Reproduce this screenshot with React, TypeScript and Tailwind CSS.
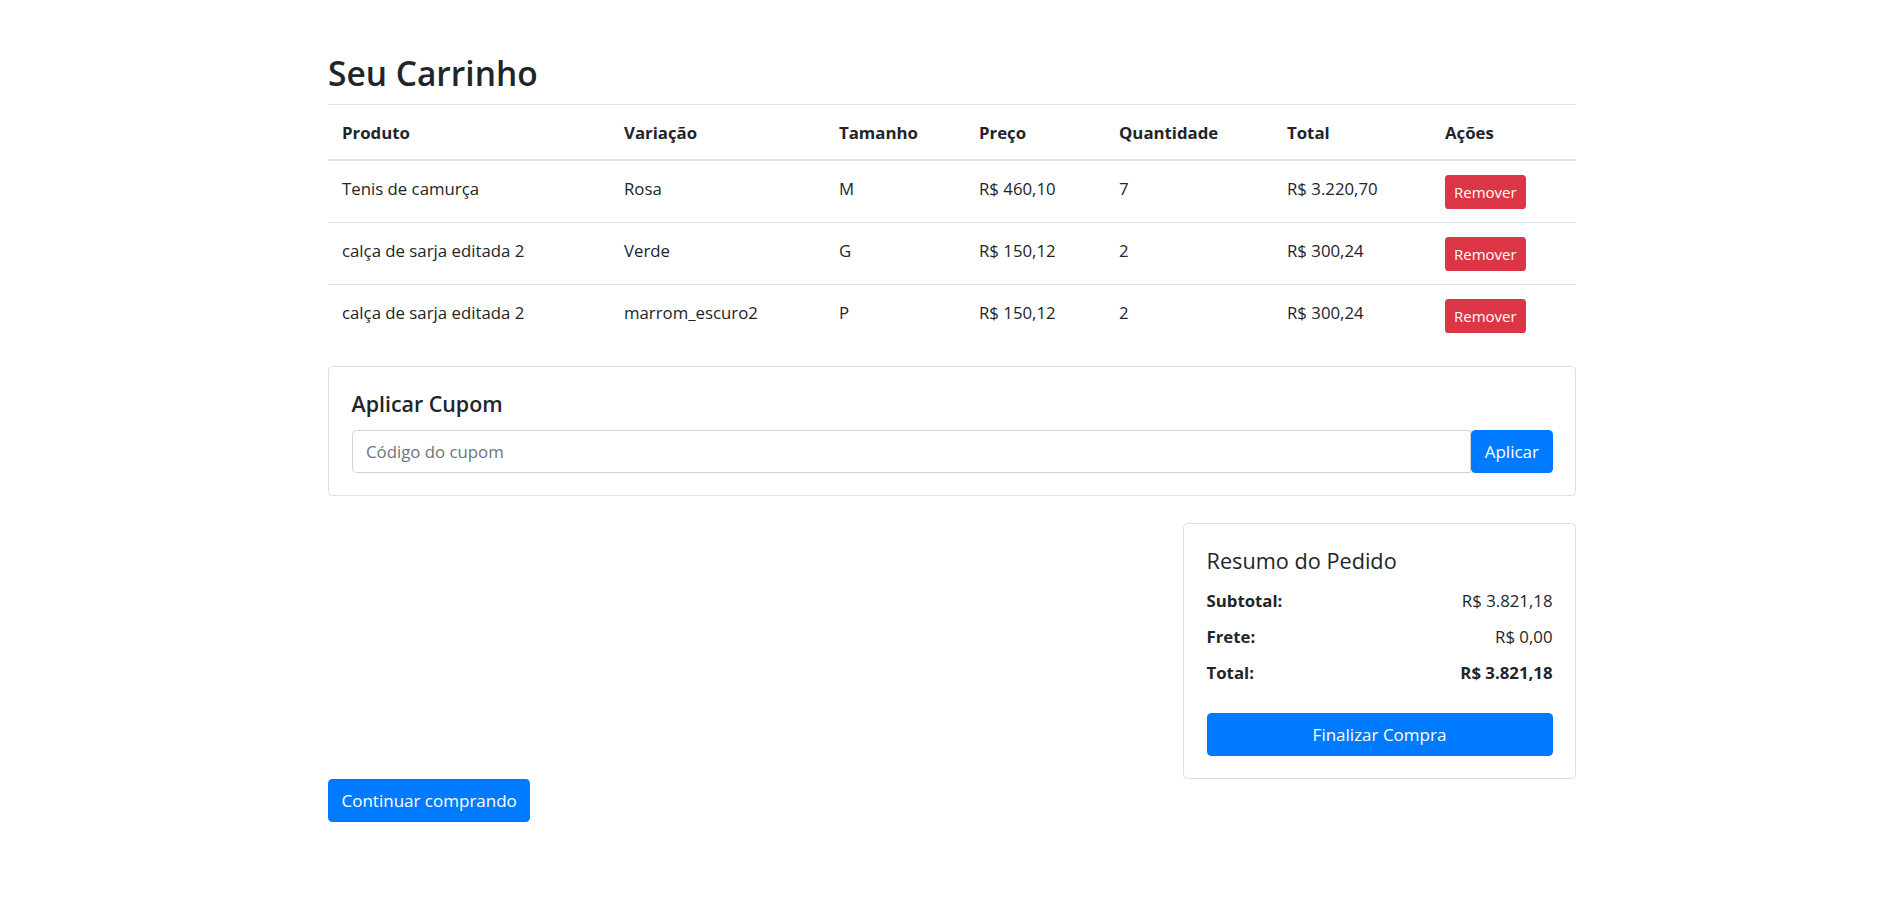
import React from "react";

const items = [
  { produto: "Tenis de camurça", variacao: "Rosa", tamanho: "M", preco: "R$ 460,10", qtd: "7", total: "R$ 3.220,70" },
  { produto: "calça de sarja editada 2", variacao: "Verde", tamanho: "G", preco: "R$ 150,12", qtd: "2", total: "R$ 300,24" },
  { produto: "calça de sarja editada 2", variacao: "marrom_escuro2", tamanho: "P", preco: "R$ 150,12", qtd: "2", total: "R$ 300,24" },
];

const headers = [
  { label: "Produto", w: "w-[282px]" },
  { label: "Variação", w: "w-[215px]" },
  { label: "Tamanho", w: "w-[140px]" },
  { label: "Preço", w: "w-[140px]" },
  { label: "Quantidade", w: "w-[168px]" },
  { label: "Total", w: "w-[158px]" },
  { label: "Ações", w: "w-[145px]" },
];

export default function App() {
  return (
    <div className="min-h-screen bg-white font-['Open_Sans',sans-serif] text-[16.8px] leading-[27px] text-[#212529]">
      <div className="w-[1248px] ml-[328px] pt-[52px] pb-10">
        <h2 className="text-[33.5px] leading-[43px] font-semibold mb-[9px]">Seu Carrinho</h2>

        <table className="w-full table-fixed border-collapse mb-[20px]">
          <thead>
            <tr>
              {headers.map((h) => (
                <th
                  key={h.label}
                  className={`${h.w} text-left font-bold px-[14px] py-[13.5px] border-t border-b-2 border-[#dee2e6] align-top`}
                >
                  {h.label}
                </th>
              ))}
            </tr>
          </thead>
          <tbody>
            {items.map((it, i) => (
              <tr key={i}>
                <td className="px-[14px] py-[13.5px] border-t border-[#dee2e6] align-top">{it.produto}</td>
                <td className="px-[14px] py-[13.5px] border-t border-[#dee2e6] align-top">{it.variacao}</td>
                <td className="px-[14px] py-[13.5px] border-t border-[#dee2e6] align-top">{it.tamanho}</td>
                <td className="px-[14px] py-[13.5px] border-t border-[#dee2e6] align-top">{it.preco}</td>
                <td className="px-[14px] py-[13.5px] border-t border-[#dee2e6] align-top">{it.qtd}</td>
                <td className="px-[14px] py-[13.5px] border-t border-[#dee2e6] align-top">{it.total}</td>
                <td className="px-[14px] py-[13.5px] border-t border-[#dee2e6] align-top">
                  <button className="h-[34px] px-[9px] rounded-[3.6px] bg-[#dc3545] text-white text-[15px] leading-[22px]">
                    Remover
                  </button>
                </td>
              </tr>
            ))}
          </tbody>
        </table>

        <div className="border border-[#dfdfdf] rounded-[4.5px] p-[22.5px] mb-[27px]">
          <h5 className="text-[21.4px] leading-[27px] font-semibold mb-[13.5px]">Aplicar Cupom</h5>
          <div className="flex">
            <input
              type="text"
              placeholder="Código do cupom"
              className="flex-1 h-[42.5px] px-[13.5px] border border-[#ced4da] rounded-l-[4.5px] outline-none placeholder:text-[#6c757d]"
            />
            <button className="h-[42.5px] px-[13.5px] rounded-[4.5px] bg-[#007bff] text-white text-[17px]">Aplicar</button>
          </div>
        </div>

        <div className="flex justify-end">
          <div className="w-[393px] border border-[#dfdfdf] rounded-[4.5px] p-[22.5px]">
            <h5 className="text-[21.7px] leading-[27px] font-normal mb-[13.5px]">Resumo do Pedido</h5>
            <div className="flex justify-between mb-[9px]">
              <span className="font-bold">Subtotal:</span>
              <span>R$ 3.821,18</span>
            </div>
            <div className="flex justify-between mb-[9px]">
              <span className="font-bold">Frete:</span>
              <span>R$ 0,00</span>
            </div>
            <div className="flex justify-between mb-[9px]">
              <span className="font-bold">Total:</span>
              <span className="font-bold">R$ 3.821,18</span>
            </div>
            <button className="mt-[18px] w-full h-[42.5px] rounded-[4.5px] bg-[#007bff] text-white text-[17px]">
              Finalizar Compra
            </button>
          </div>
        </div>

        <button className="h-[42.5px] px-[13.5px] rounded-[4.5px] bg-[#007bff] text-white text-[17px]">
          Continuar comprando
        </button>
      </div>
    </div>
  );
}
